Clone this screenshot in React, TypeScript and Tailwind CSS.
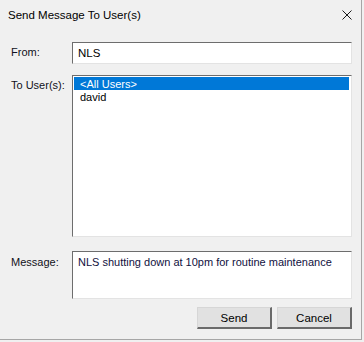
import { useState } from "react";

const users = ["<All Users>", "david"];

function CloseGlyph() {
  return (
    <svg width="10" height="10" viewBox="0 0 10 10" className="block">
      <path d="M0.5 0.5 L9.5 9.5 M9.5 0.5 L0.5 9.5" stroke="#1a1a1a" strokeWidth="1" fill="none" />
    </svg>
  );
}

function DialogButton({ label }: { label: string }) {
  return (
    <button
      type="button"
      className="flex h-[22px] w-[75px] items-center justify-center border-t border-l border-r-2 border-b-2 border-t-[#d6d6d6] border-l-[#d6d6d6] border-r-[#6a6a6a] border-b-[#6a6a6a] bg-[#e1e1e1] text-[11.5px] text-black"
    >
      {label}
    </button>
  );
}

export default function App() {
  const [selected, setSelected] = useState(0);

  return (
    <div className="h-[342px] w-[364px] whitespace-nowrap bg-[#f0f0f0] font-['Liberation_Sans',Arial,sans-serif] text-[11px] leading-[14px] text-[#101020]">
      <div className="flex h-[340px] w-[362px] flex-col border-r border-b border-[#a6a6a6]">
        <div className="flex h-[29px] shrink-0 items-center justify-between pl-[8px] pr-[9px]">
          <span className="text-[11.5px] text-black">Send Message To User(s)</span>
          <CloseGlyph />
        </div>

        <div className="mt-[13px] flex">
          <div className="w-[72px] pl-[11px] pt-[3px]">From:</div>
          <div className="flex h-[22px] w-[280px] items-center border-t border-l border-r border-b border-t-[#6d6d6d] border-l-[#6d6d6d] border-r-[#e3e3e3] border-b-[#e3e3e3] bg-white pl-[5px] text-[11.5px] text-black">
            NLS
          </div>
        </div>

        <div className="mt-[11px] flex">
          <div className="w-[72px] pl-[11px] pt-[3px]">To User(s):</div>
          <div className="h-[162px] w-[280px] border-t border-l border-r border-b border-t-[#6d6d6d] border-l-[#6d6d6d] border-r-[#e3e3e3] border-b-[#e3e3e3] bg-white pt-[1px] pl-[1px] pr-[2px]">
            {users.map((user, i) => (
              <div
                key={user}
                onClick={() => setSelected(i)}
                className={
                  i === selected
                    ? "flex h-[13px] items-center bg-[#0078d7] pl-[6px] text-white"
                    : "flex h-[14px] items-center pl-[6px] text-black"
                }
              >
                {user}
              </div>
            ))}
          </div>
        </div>

        <div className="mt-[14px] flex">
          <div className="w-[72px] pl-[11px] pt-[4px]">Message:</div>
          <div className="h-[48px] w-[280px] border-t border-l border-r border-b border-t-[#6d6d6d] border-l-[#6d6d6d] border-r-[#e3e3e3] border-b-[#e3e3e3] bg-white pl-[5px] pt-[3px] text-[#101040]">
            NLS shutting down at 10pm for routine maintenance
          </div>
        </div>

        <div className="mt-[8px] flex w-[352px] justify-end gap-[5px]">
          <DialogButton label="Send" />
          <DialogButton label="Cancel" />
        </div>
      </div>
    </div>
  );
}
